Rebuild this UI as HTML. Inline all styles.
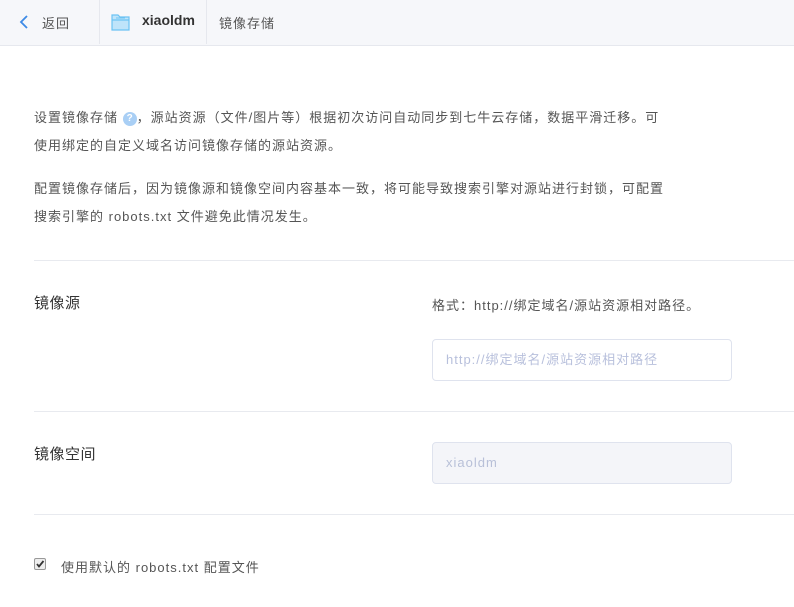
<!DOCTYPE html>
<html><head><meta charset="utf-8"><style>
*{margin:0;padding:0;box-sizing:border-box}
body{width:794px;height:607px;background:#fff;font-family:"Liberation Sans","Noto Sans CJK SC",sans-serif;color:#555;overflow:hidden;position:relative}
.hdr{position:absolute;left:0;top:0;width:794px;height:46px;background:#f6f7fa;border-bottom:1px solid #e6e8ee}
.t{position:absolute;white-space:nowrap}
.vl{position:absolute;top:0;width:1px;height:44px;background:#e6e8ee}
.p{font-size:13px;color:#555;left:34px;letter-spacing:1px}
.hr{position:absolute;left:34px;width:760px;height:1px;background:#e8eaef}
.lbl{font-size:15px;color:#333;left:34px;letter-spacing:0.5px}
.inp{position:absolute;left:432px;width:300px;height:42px;border:1px solid #dfe3ee;border-radius:4px;font-size:13px;color:#b8c0dc;padding-left:13px;line-height:40px;letter-spacing:1px}
</style></head><body>
<div class="hdr">
<svg style="position:absolute;left:19px;top:14px" width="10" height="16" viewBox="0 0 10 16"><path d="M8 2 L2 8 L8 14" fill="none" stroke="#3d8ae6" stroke-width="1.8"/></svg>
<div class="t" style="left:42px;top:13px;font-size:13px;color:#555;letter-spacing:1px">返回</div>
<div class="vl" style="left:99px"></div>
<svg style="position:absolute;left:111px;top:12px" width="20" height="20" viewBox="0 0 20 20"><path d="M1 3 H7 L9 5 H18 V18 H1Z" fill="#bfe4fa" stroke="#6cc3f3" stroke-width="1.2"/><path d="M1 8 H18" stroke="#6cc3f3" stroke-width="1.2"/><path d="M5 6 H14" stroke="#6cc3f3" stroke-width="1"/></svg>
<div class="t" style="left:142px;top:12px;font-size:14px;font-weight:bold;color:#333">xiaoldm</div>
<div class="vl" style="left:206px"></div>
<div class="t" style="left:219px;top:13px;font-size:13px;color:#555;letter-spacing:1px">镜像存储</div>
</div>
<div class="t p" style="top:107px">设置镜像存储 <span style="display:inline-block;width:14px;height:14px;border-radius:50%;background:#a9cff5;color:#fff;font-size:10px;text-align:center;line-height:14px;vertical-align:1px;font-weight:bold;letter-spacing:0">?</span>，源站资源（文件/图片等）根据初次访问自动同步到七牛云存储，数据平滑迁移。可</div>
<div class="t p" style="top:135px">使用绑定的自定义域名访问镜像存储的源站资源。</div>
<div class="t p" style="top:178px">配置镜像存储后，因为镜像源和镜像空间内容基本一致，将可能导致搜索引擎对源站进行封锁，可配置</div>
<div class="t p" style="top:206px">搜索引擎的 robots.txt 文件避免此情况发生。</div>
<div class="hr" style="top:260px"></div>
<div class="t lbl" style="top:292px">镜像源</div>
<div class="t" style="left:432px;top:295px;font-size:13px;color:#555;letter-spacing:1px">格式：http://绑定域名/源站资源相对路径。</div>
<div class="inp" style="top:339px;background:#fff">http://绑定域名/源站资源相对路径</div>
<div class="hr" style="top:411px"></div>
<div class="t lbl" style="top:443px">镜像空间</div>
<div class="inp" style="top:442px;background:#f4f5f9;color:#b8c0d8">xiaoldm</div>
<div class="hr" style="top:514px"></div>
<div style="position:absolute;left:34px;top:558px;width:12px;height:12px;border:1px solid #999;border-radius:2px;background:#eee"><svg width="10" height="10" viewBox="0 0 10 10" style="position:absolute;left:0;top:0"><path d="M2 5 L4 7.5 L8.5 2" fill="none" stroke="#333" stroke-width="1.8"/></svg></div>
<div class="t" style="left:61px;top:557px;font-size:13px;color:#555;letter-spacing:1px">使用默认的 robots.txt 配置文件</div>
</body></html>
